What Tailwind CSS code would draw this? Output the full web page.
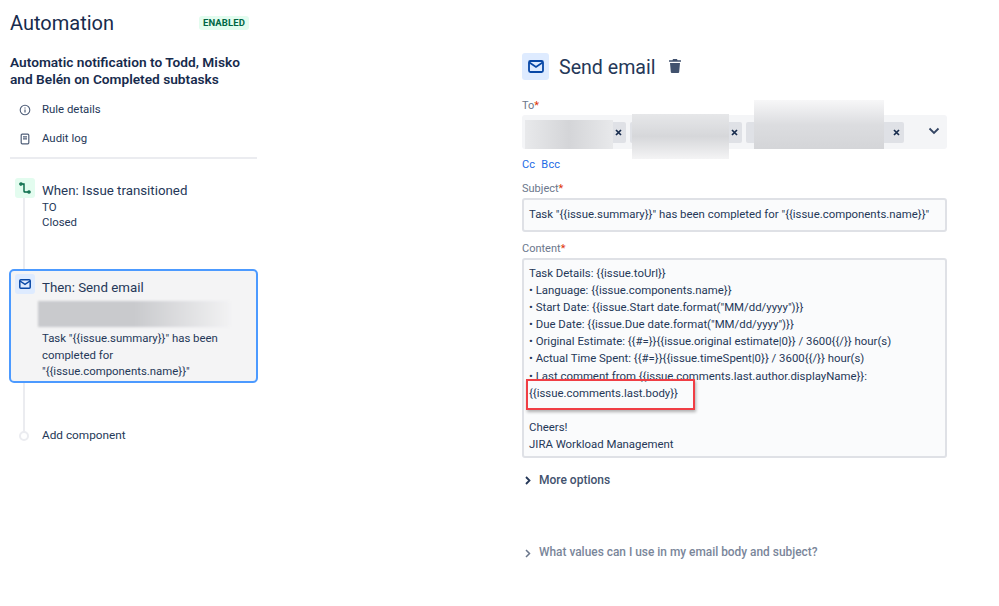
<!DOCTYPE html>
<html lang="en">
<head>
  <meta charset="UTF-8" />
  <title>Automation</title>
  <script src="https://cdn.jsdelivr.net/npm/@tailwindcss/browser@4"></script>
</head>
<body class="bg-white font-['Roboto',sans-serif] text-[#253858] text-[11.4px] h-[606px] w-[999px] overflow-hidden">
  <div class="flex">
    <!-- left column -->
    <div class="w-[522px] pl-[10px] pt-[11px] shrink-0">
      <div class="w-[247px]">
        <div class="flex items-center h-[24px]">
          <h1 class="text-[20px] leading-[24px] text-[#172b4d] w-[189px]">Automation</h1>
          <span class="bg-[#e3fcef] text-[#006644] text-[9.5px] leading-[14px] font-bold px-[4px] rounded-[3px] tracking-[0.1px]">ENABLED</span>
        </div>
        <h2 class="mt-[19px] text-[13.7px] leading-[17px] font-semibold text-[#172b4d] w-[240px]">Automatic notification to Todd, Misko and Belén on Completed subtasks</h2>
        <div class="mt-[7px] flex items-center h-[29px] pl-[9px]">
          <svg class="w-[12px] h-[12px] text-[#505f79] mr-[11px]" viewBox="0 0 12 12" fill="none" stroke="currentColor"><circle cx="6" cy="6" r="4.8" stroke-width="1.1"/><path d="M6 5.5v3M6 3.400v1" stroke-width="1.2"/></svg>
          <span>Rule details</span>
        </div>
        <div class="flex items-center h-[29px] pl-[9px]">
          <svg class="w-[12px] h-[12px] text-[#505f79] mr-[11px]" viewBox="0 0 12 12" fill="none" stroke="currentColor"><rect x="2.2" y="1.2" width="7.6" height="9.6" rx="1" stroke-width="1.2"/><path d="M4 3.800h4M4 5.800h4" stroke-width="1.2"/></svg>
          <span>Audit log</span>
        </div>
        <div class="mt-[4px] h-[2px] bg-[#ebecf0]"></div>

        <!-- rule steps -->
        <div class="relative mt-[19px]">
          <div class="absolute left-[13px] top-[10px] w-[2px] h-[250px] bg-[#ebecf0]"></div>
          <div class="relative flex pl-[5px] h-[91px]">
            <div class="w-[20px] h-[20px] rounded-[3px] bg-[#e3fcef] flex items-center justify-center mr-[7px] shrink-0">
              <svg class="w-[14px] h-[14px] text-[#006644]" viewBox="0 0 14 14" fill="none" stroke="currentColor" stroke-width="1.4"><circle cx="3" cy="3" r="1.100"/><circle cx="11" cy="11" r="1.100"/><path d="M4.200 3H6v7.200c0 .5.3.8.8.8h3"/></svg>
            </div>
            <div class="pt-[3px]">
              <div class="text-[13.3px] leading-[20px] text-[#253858]">When: Issue transitioned</div>
              <div class="leading-[15px] -mt-[1px]">TO</div>
              <div class="leading-[15px]">Closed</div>
            </div>
          </div>

          <div class="relative -ml-[1px] w-[249px] h-[114px] border-2 border-[#4c9aff] rounded-[5px] bg-[#f4f4f5] flex pl-[4px] pt-[3px]">
            <div class="w-[20px] h-[20px] rounded-[3px] bg-[#deebff] flex items-center justify-center mr-[7px] shrink-0">
              <svg class="w-[12px] h-[10px] text-[#0747a6]" viewBox="0 0 12 10" fill="none" stroke="currentColor" stroke-width="1.5"><rect x=".8" y=".8" width="10.400" height="8.400" rx="1"/><path d="M1 2l5 3.400L11 2"/></svg>
            </div>
            <div class="pt-[4px]">
              <div class="text-[13.3px] leading-[20px]">Then: Send email</div>
              <div class="mt-[32px] leading-[16.500px]">Task "{{issue.summary}}" has been<br>completed for<br>"{{issue.components.name}}"</div>
            </div>
            <div class="absolute left-[27px] top-[30px] w-[192px] h-[26px] bg-gradient-to-r from-[#c9cacd] via-[#c9cacd] to-[#f2f2f3] blur-[1px]"></div>
          </div>

          <div class="relative flex items-center mt-[45px] pl-[9px] h-[16px] text-[11.8px]">
            <div class="w-[10px] h-[10px] rounded-full border-2 border-[#ebecf0] bg-white mr-[13px]"></div>
            <span>Add component</span>
          </div>
        </div>
      </div>
    </div>

    <!-- right column -->
    <div class="w-[425px] pt-[53px] relative">
      <div class="flex items-center h-[27px]">
        <div class="w-[27px] h-[27px] rounded-[3px] bg-[#deebff] flex items-center justify-center mr-[10px]">
          <svg class="w-[16px] h-[13px] text-[#0747a6]" viewBox="0 0 16 13" fill="none" stroke="currentColor" stroke-width="1.8"><rect x="1" y="1" width="14" height="11" rx="1.400"/><path d="M1.400 2.600L8 7l6.600-4.400"/></svg>
        </div>
        <span class="text-[19.6px] leading-[27px] mt-[1px] text-[#253858]">Send email</span>
        <svg class="w-[14px] h-[16px] ml-[12px] -mt-[1px] text-[#42526e]" viewBox="0 0 14 16" fill="currentColor"><path d="M5 1h4l.5 1.200H13v1.600H1V2.200h3.500zM2 5h10l-.8 9a1 1 0 0 1-1 .9H3.800a1 1 0 0 1-1-.9z"/></svg>
      </div>

      <div class="mt-[18px] text-[#6b778c] text-[11px] leading-[16px]">To<span class="text-[#de350b]">*</span></div>
      <div class="relative mt-[1px] h-[34px] rounded-[3px] bg-[#f4f5f7] flex items-center pl-[3px]">
        <div class="w-[101px] h-[21px] rounded-[2px] bg-[#dfe1e6] flex items-center justify-end pr-[4px] text-[#172b4d]"><svg class="w-[7px] h-[7px]" viewBox="0 0 7 7" stroke="currentColor" stroke-width="1.700"><path d="M1 1l5 5M6 1L1 6"/></svg></div>
        <div class="ml-[4px] w-[112px] h-[21px] rounded-[2px] bg-[#dfe1e6] flex items-center justify-end pr-[4px] text-[#172b4d]"><svg class="w-[7px] h-[7px]" viewBox="0 0 7 7" stroke="currentColor" stroke-width="1.700"><path d="M1 1l5 5M6 1L1 6"/></svg></div>
        <div class="ml-[4px] w-[158px] h-[21px] rounded-[2px] bg-[#dfe1e6] flex items-center justify-end pr-[4px] text-[#172b4d]"><svg class="w-[7px] h-[7px]" viewBox="0 0 7 7" stroke="currentColor" stroke-width="1.700"><path d="M1 1l5 5M6 1L1 6"/></svg></div>
        <svg class="absolute right-[7px] top-[12px] w-[12px] h-[8px] text-[#344563]" viewBox="0 0 12 8" fill="none" stroke="currentColor" stroke-width="1.800"><path d="M1.500 1.500L6 6l4.500-4.500"/></svg>
        <!-- blurred out recipients -->
        <div class="absolute left-[3px] top-[5px] w-[88px] h-[29px] bg-gradient-to-r from-[#e8e9eb] via-[#d4d5d8] to-[#e8e9eb] blur-[0.5px]"></div>
        <div class="absolute left-[110px] -top-[1px] w-[97px] h-[45px] bg-gradient-to-b from-[#e6e7e9] via-[#d6d7da] to-[#f4f4f5] blur-[0.5px]"></div>
        <div class="absolute left-[232px] -top-[15px] w-[130px] h-[49px] bg-gradient-to-b from-[#f7f7f8] via-[#dcdde0] to-[#d4d5d8] blur-[0.5px]"></div>
      </div>
      <div class="mt-[8px] text-[#1d6ae5] text-[11px] leading-[16px] flex gap-[6px] tracking-[0.2px]"><span>Cc</span><span>Bcc</span></div>

      <div class="mt-[8px] text-[#6b778c] text-[11px] leading-[16px]">Subject<span class="text-[#de350b]">*</span></div>
      <div class="mt-[1px] h-[34px] rounded-[3px] border-2 border-[#dfe1e6] bg-[#fafbfc] flex items-center pl-[5px] whitespace-nowrap">Task "{{issue.summary}}" has been completed for "{{issue.components.name}}"</div>

      <div class="mt-[9px] text-[#6b778c] text-[11px] leading-[16px]">Content<span class="text-[#de350b]">*</span></div>
      <div class="relative mt-[1px] h-[200px] rounded-[3px] border-2 border-[#dfe1e6] bg-[#fafbfc] pl-[5px] pt-[5px] leading-[17.100px] whitespace-nowrap">
        <div>Task Details: {{issue.toUrl}}</div>
        <div>• Language: {{issue.components.name}}</div>
        <div>• Start Date: {{issue.Start date.format("MM/dd/yyyy")}}</div>
        <div>• Due Date: {{issue.Due date.format("MM/dd/yyyy")}}</div>
        <div>• Original Estimate: {{#=}}{{issue.original estimate|0}} / 3600{{/}} hour(s)</div>
        <div>• Actual Time Spent: {{#=}}{{issue.timeSpent|0}} / 3600{{/}} hour(s)</div>
        <div>• Last comment from {{issue.comments.last.author.displayName}}:</div>
        <div>{{issue.comments.last.body}}</div>
        <div class="h-[17px]"></div>
        <div>Cheers!</div>
        <div>JIRA Workload Management</div>
        <div class="absolute left-[2px] top-[119px] w-[169px] h-[31px] border-[2.500px] border-[#f03e45] shadow-[1px_2px_3px_rgba(0,0,0,0.3)]"></div>
      </div>

      <div class="mt-[14px] flex items-center h-[16px] font-medium text-[12px] text-[#42526e]">
        <svg class="w-[6px] h-[9px] ml-[3px] mr-[8px] text-[#253858]" viewBox="0 0 6 9" fill="none" stroke="currentColor" stroke-width="1.800"><path d="M1 1l3.500 3.500L1 8"/></svg>
        <span>More options</span>
      </div>
      <div class="mt-[57px] flex items-center h-[16px] font-medium text-[11.9px] text-[#7a869a]">
        <svg class="w-[6px] h-[9px] ml-[3px] mr-[8px] text-[#6b778c]" viewBox="0 0 6 9" fill="none" stroke="currentColor" stroke-width="1.500"><path d="M1 1l3.500 3.500L1 8"/></svg>
        <span>What values can I use in my email body and subject?</span>
      </div>
    </div>
  </div>
</body>
</html>
